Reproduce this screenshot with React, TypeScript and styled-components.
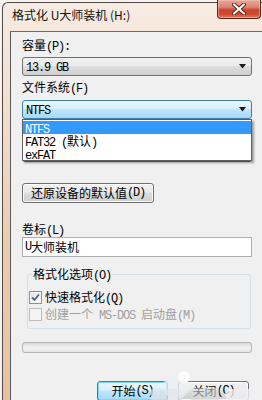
import React from "react";
import styled, { createGlobalStyle } from "styled-components";

const Global = createGlobalStyle`
  html, body { margin: 0; padding: 0; background: #f8f1ec; overflow: hidden; width: 262px; height: 400px; }
  #root { width: 262px; height: 400px; }
  * { box-sizing: border-box; }
`;

const CJK = `"Noto Sans CJK SC", "Noto Sans", sans-serif`;

const Half = styled.span`
  font-family: "Liberation Mono", monospace;
  letter-spacing: -1.2px;
`;

function mix(t: string) {
  return t
    .split(/([\x00-\x7f]+)/)
    .filter((s) => s.length > 0)
    .map((s, i) => (/^[\x00-\x7f]+$/.test(s) ? <Half key={i}>{s}</Half> : <span key={i}>{s}</span>));
}

const Window = styled.div`
  position: relative;
  margin: 2px 0 0 2px;
  width: 260px;
  height: 398px;
  border: 1px solid #4d4d4d;
  border-right: none;
  border-bottom: none;
  border-top-left-radius: 6px;
  background: linear-gradient(180deg, #f7ebe2 0%, #f2dfcf 25%, #ecccb0 60%, #e8c29f 100%);
  display: flex;
  flex-direction: column;
  font-family: ${CJK};
  font-size: 12px;
  color: #000;
`;

const TitleBar = styled.div`
  height: 28px;
  flex: none;
  display: flex;
  align-items: flex-start;
  padding: 0 1px 0 9px;
`;

const Title = styled.div`
  margin-top: 3px;
  font-size: 12px;
  line-height: 18px;
  color: #111;
  white-space: nowrap;
`;

const CloseBtn = styled.div`
  margin-left: auto;
  margin-top: -3px;
  width: 44px;
  height: 19px;
  border: 1px solid #5e2418;
  border-top: none;
  border-radius: 0 0 4px 4px;
  background: linear-gradient(180deg, #e7a897 0%, #d98572 40%, #c6452f 55%, #d3492f 80%, #e1806a 100%);
  box-shadow: inset 0 0 0 1px rgba(255, 210, 200, 0.45);
  display: flex;
  align-items: center;
  justify-content: center;
`;

const Panel = styled.div`
  flex: 1;
  margin-left: 7px;
  border-left: 1px solid #5a5a5a;
  border-top: 1px solid #6a6a6a;
  background: #f0f0f0;
  padding-left: 11px;
  display: flex;
  flex-direction: column;
  align-items: flex-start;
`;

const Label = styled.div<{ $mt: number }>`
  margin-top: ${(p) => p.$mt}px;
  line-height: 14px;
  height: 14px;
  white-space: nowrap;
`;

const ComboWrap = styled.div<{ $mt: number; $z?: number }>`
  position: relative;
  margin-top: ${(p) => p.$mt}px;
  z-index: ${(p) => p.$z ?? 0};
`;

const Combo = styled.div<{ $active?: boolean }>`
  width: 230px;
  height: 19px;
  border: 1px solid ${(p) => (p.$active ? "#3c7fb1" : "#707070")};
  border-radius: 3px;
  background: ${(p) =>
    p.$active
      ? "linear-gradient(180deg, #eaf6fd 0%, #d9f0fc 45%, #bee6fd 50%, #a7d9f5 100%)"
      : "linear-gradient(180deg, #f2f2f2 0%, #ebebeb 45%, #dddddd 50%, #cfcfcf 100%)"};
  display: flex;
  align-items: center;
  padding: 0 4px 0 3px;
  line-height: 14px;
  white-space: nowrap;
`;

const ComboText = styled.div`
  flex: 1;
`;

const List = styled.div`
  position: absolute;
  top: 100%;
  left: 0;
  width: 230px;
  background: #fff;
  border: 1px solid #5f5f5f;
  box-shadow: 2px 2px 2px rgba(0, 0, 0, 0.35);
  padding: 1px 0 0;
`;

const Item = styled.div<{ $sel?: boolean }>`
  height: 13px;
  line-height: 13px;
  padding-left: 2px;
  background: ${(p) => (p.$sel ? "#3399ff" : "transparent")};
  color: ${(p) => (p.$sel ? "#fff" : "#000")};
  white-space: nowrap;
`;

const Button = styled.div<{ $w: number; $mt?: number; $focus?: boolean }>`
  margin-top: ${(p) => p.$mt ?? 0}px;
  width: ${(p) => p.$w}px;
  height: 20px;
  border: 1px solid ${(p) => (p.$focus ? "#3c7fb1" : "#707070")};
  border-radius: 3px;
  background: ${(p) =>
    p.$focus
      ? "linear-gradient(180deg, #eaf6fd 0%, #d9f0fc 45%, #bee6fd 50%, #a7d9f5 100%)"
      : "linear-gradient(180deg, #f2f2f2 0%, #ebebeb 45%, #dddddd 50%, #cfcfcf 100%)"};
  box-shadow: inset 0 0 0 1px ${(p) => (p.$focus ? "rgba(120,210,250,0.9)" : "rgba(255,255,255,0.8)")};
  display: flex;
  align-items: center;
  justify-content: center;
  line-height: 14px;
  white-space: nowrap;
`;

const TextBox = styled.div`
  margin-top: 1px;
  width: 230px;
  height: 20px;
  background: #fff;
  border: 1px solid #abadb3;
  display: flex;
  align-items: center;
  padding-left: 2px;
  line-height: 14px;
`;

const Group = styled.div`
  margin-top: 17px;
  margin-left: 5px;
  width: 224px;
  border: 1px solid #d5dfe5;
  border-radius: 3px;
  padding: 0 0 7px 1px;
  display: flex;
  flex-direction: column;
`;

const Legend = styled.div`
  margin-top: -8px;
  margin-left: 3px;
  align-self: flex-start;
  padding: 0 1px;
  background: #f0f0f0;
  line-height: 14px;
  white-space: nowrap;
`;

const CheckRow = styled.div<{ $mt: number; $disabled?: boolean }>`
  margin-top: ${(p) => p.$mt}px;
  display: flex;
  align-items: center;
  gap: 3px;
  height: 13px;
  line-height: 13px;
  color: ${(p) => (p.$disabled ? "#a0a0a0" : "#000")};
  white-space: nowrap;
`;

const Box = styled.div<{ $disabled?: boolean }>`
  width: 13px;
  height: 13px;
  flex: none;
  border: 1px solid ${(p) => (p.$disabled ? "#bcbcbc" : "#8e8f8f")};
  background: ${(p) =>
    p.$disabled ? "#f4f4f4" : "linear-gradient(135deg, #dcdcdc 0%, #f6f6f6 60%, #ffffff 100%)"};
  box-shadow: inset 0 0 0 1px #f4f4f4;
  display: flex;
  align-items: center;
  justify-content: center;
`;

const Progress = styled.div`
  margin-top: 13px;
  width: 230px;
  height: 11px;
  border: 1px solid #b4b4b4;
  border-radius: 3px;
  background: linear-gradient(180deg, #d6d6d6 0%, #e9e9e9 30%, #f3f3f3 60%, #e2e2e2 100%);
`;

const ButtonRow = styled.div`
  margin-top: 28px;
  width: 227px;
  display: flex;
  justify-content: flex-end;
  gap: 10px;
`;

const Blob = styled.div<{ $x: number; $y: number; $w: number; $h: number; $r: number; $c: string }>`
  position: absolute;
  left: ${(p) => p.$x}px;
  top: ${(p) => p.$y}px;
  width: ${(p) => p.$w}px;
  height: ${(p) => p.$h}px;
  border-radius: ${(p) => p.$r}px;
  background: ${(p) => p.$c};
  pointer-events: none;
`;

const Arrow = () => (
  <svg width="8" height="5" viewBox="0 0 8 5">
    <path d="M0 0 H7 L3.5 4.5 Z" fill="#1a1a1a" />
  </svg>
);

const CloseX = () => (
  <svg width="14" height="12" viewBox="0 0 14 12">
    <path d="M2 1.5 L12 10.5 M12 1.5 L2 10.5" stroke="#5a2418" strokeWidth="4" strokeLinecap="round" />
    <path d="M2 1.5 L12 10.5 M12 1.5 L2 10.5" stroke="#ffffff" strokeWidth="2.2" strokeLinecap="round" />
  </svg>
);

const Check = () => (
  <svg width="9" height="9" viewBox="0 0 9 9">
    <path d="M1 4.5 L3.5 7 L8 1.5" stroke="#4b5e8c" strokeWidth="1.8" fill="none" />
  </svg>
);

export default function App() {
  return (
    <>
      <Global />
      <Window>
        <TitleBar>
          <Title>格式化 U大师装机 (H:)</Title>
          <CloseBtn>
            <CloseX />
          </CloseBtn>
        </TitleBar>
        <Panel>
          <Label $mt={6}>{mix("容量(P):")}</Label>
          <ComboWrap $mt={5}>
            <Combo>
              <ComboText>{mix("13.9 GB")}</ComboText>
              <Arrow />
            </Combo>
          </ComboWrap>
          <Label $mt={4}>{mix("文件系统(F)")}</Label>
          <ComboWrap $mt={6} $z={3}>
            <Combo $active>
              <ComboText>{mix("NTFS")}</ComboText>
              <Arrow />
            </Combo>
            <List>
              <Item $sel>{mix("NTFS")}</Item>
              <Item>{mix("FAT32 (默认)")}</Item>
              <Item>{mix("exFAT")}</Item>
            </List>
          </ComboWrap>
          <Label $mt={4} />
          <ComboWrap $mt={6}>
            <Combo>
              <ComboText />
              <Arrow />
            </Combo>
          </ComboWrap>
          <Button $w={132} $mt={21}>
            {mix("还原设备的默认值(D)")}
          </Button>
          <Label $mt={19}>{mix("卷标(L)")}</Label>
          <TextBox>{mix("U大师装机")}</TextBox>
          <Group>
            <Legend>{mix("格式化选项(O)")}</Legend>
            <CheckRow $mt={8}>
              <Box>
                <Check />
              </Box>
              <span>{mix("快速格式化(Q)")}</span>
            </CheckRow>
            <CheckRow $mt={4} $disabled>
              <Box $disabled />
              <span>{mix("创建一个 MS-DOS 启动盘(M)")}</span>
            </CheckRow>
          </Group>
          <Progress />
          <ButtonRow>
            <Button $w={71} $focus>
              {mix("开始(S)")}
            </Button>
            <Button $w={71}>{mix("关闭(C)")}</Button>
          </ButtonRow>
        </Panel>
        <Blob $x={160} $y={373} $w={26} $h={22} $r={11} $c="rgba(235,240,245,0.75)" />
        <Blob $x={175} $y={368} $w={12} $h={12} $r={6} $c="rgba(255,255,255,0.8)" />
        <Blob $x={148} $y={386} $w={30} $h={12} $r={2} $c="rgba(225,228,232,0.7)" />
        <Blob $x={188} $y={385} $w={28} $h={13} $r={2} $c="rgba(215,218,222,0.6)" />
        <Blob $x={222} $y={386} $w={38} $h={12} $r={6} $c="rgba(240,240,242,0.8)" />
      </Window>
    </>
  );
}
